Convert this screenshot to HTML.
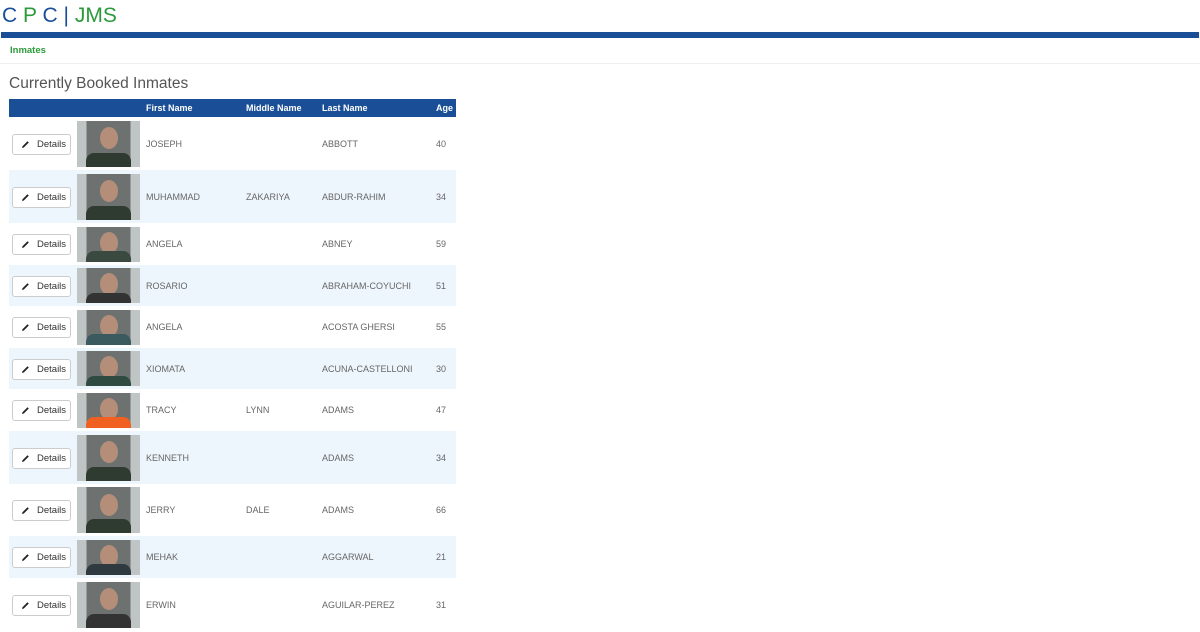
<!DOCTYPE html>
<html><head><style>
body{margin:0;background:#fff;font-family:"Liberation Sans",sans-serif;width:1200px;height:620px;overflow:hidden;position:relative}
.logo{position:absolute;left:2px;top:4px;font-size:21px;letter-spacing:0}
.bar{position:absolute;left:1px;right:1px;top:32px;height:6px;background:#1a4e96}
.nav{position:absolute;left:10px;top:45px;font-size:9.5px;font-weight:bold;color:#2a9a3a}
.hr{position:absolute;left:0;right:0;top:63px;height:1px;background:#eee}
h1{position:absolute;left:9px;top:75px;margin:0;font-weight:normal;font-size:15.5px;color:#555}
.th{position:absolute;left:9px;top:99px;width:447px;height:18px;background:#1a4e96;color:#fff;font-size:9px;font-weight:bold}
.th span,.row span{position:absolute;top:0}
.row{position:absolute;left:9px;width:447px;font-size:9px;color:#666}
.row.alt{background:#eef6fd}
.btn{position:absolute;left:3px;width:59px;height:21px;border:1px solid #ccc;border-radius:3px;background:#fff;color:#333;font-size:9.5px;box-sizing:border-box;line-height:19px;padding-left:24px}
.btn svg{position:absolute;left:8px;top:5px}
.ph{position:absolute;left:68px;width:63px;background:linear-gradient(90deg,#bfc4c4 0,#bfc4c4 15%,#6d7270 15%,#6d7270 85%,#bfc4c4 85%)}
.ph i{position:absolute;left:50%;margin-left:-9px;width:18px;height:22px;border-radius:50%;background:#b58e7a;top:15%}
.ph b{position:absolute;left:15%;right:15%;bottom:0;height:30%;background:#2f3a30;border-radius:8px 8px 0 0}
</style></head><body>
<div class="logo"><span style="color:#1a4e96">C</span> <span style="color:#2a9a3a">P</span> <span style="color:#1a4e96">C</span> <span style="color:#1a4e96">|</span> <span style="color:#2a9a3a">JMS</span></div>
<div class="bar"></div>
<div class="nav">Inmates</div>
<div class="hr"></div>
<h1>Currently Booked Inmates</h1>
<div class="th"><span style="left:137px;line-height:18px">First Name</span><span style="left:237px;line-height:18px">Middle Name</span><span style="left:313px;line-height:18px">Last Name</span><span style="left:427px;line-height:18px">Age</span></div>
<div id="rows"></div>
<script>
var d=[[117,53,"JOSEPH","","ABBOTT",40,46,"#2f3a30"],[170,53,"MUHAMMAD","ZAKARIYA","ABDUR-RAHIM",34,46,"#2f3a30"],[223,42,"ANGELA","","ABNEY",59,35,"#3a4a40"],[265,41,"ROSARIO","","ABRAHAM-COYUCHI",51,35,"#333"],[306,42,"ANGELA","","ACOSTA GHERSI",55,35,"#3a5a60"],[348,41,"XIOMATA","","ACUNA-CASTELLONI",30,35,"#2f4a40"],[389,42,"TRACY","LYNN","ADAMS",47,35,"#f06020"],[431,53,"KENNETH","","ADAMS",34,46,"#2f3a30"],[484,52,"JERRY","DALE","ADAMS",66,46,"#2f3a30"],[536,42,"MEHAK","","AGGARWAL",21,35,"#2f3a40"],[578,53,"ERWIN","","AGUILAR-PEREZ",31,46,"#333"]];
var h="";d.forEach(function(r,i){var c=r[1]/2;var lh="line-height:"+(r[1]+1)+"px";
h+='<div class="row'+(i%2?' alt':'')+'" style="top:'+r[0]+'px;height:'+r[1]+'px">'+
'<div class="btn" style="top:'+(c-10)+'px"><svg width="9" height="9" viewBox="0 0 9 9"><path d="M1 8 L1.5 6.2 L6.5 1.2 L7.8 2.5 L2.8 7.5 Z" fill="#222"/></svg>Details</div>'+
'<div class="ph" style="top:'+(c-r[6]/2)+'px;height:'+r[6]+'px"><i></i><b style="background:'+r[7]+'"></b></div>'+
'<span style="left:137px;'+lh+'">'+r[2]+'</span><span style="left:237px;'+lh+'">'+r[3]+'</span><span style="left:313px;'+lh+'">'+r[4]+'</span><span style="left:427px;'+lh+'">'+r[5]+'</span></div>';});
document.getElementById("rows").innerHTML=h;
</script>
</body></html>
